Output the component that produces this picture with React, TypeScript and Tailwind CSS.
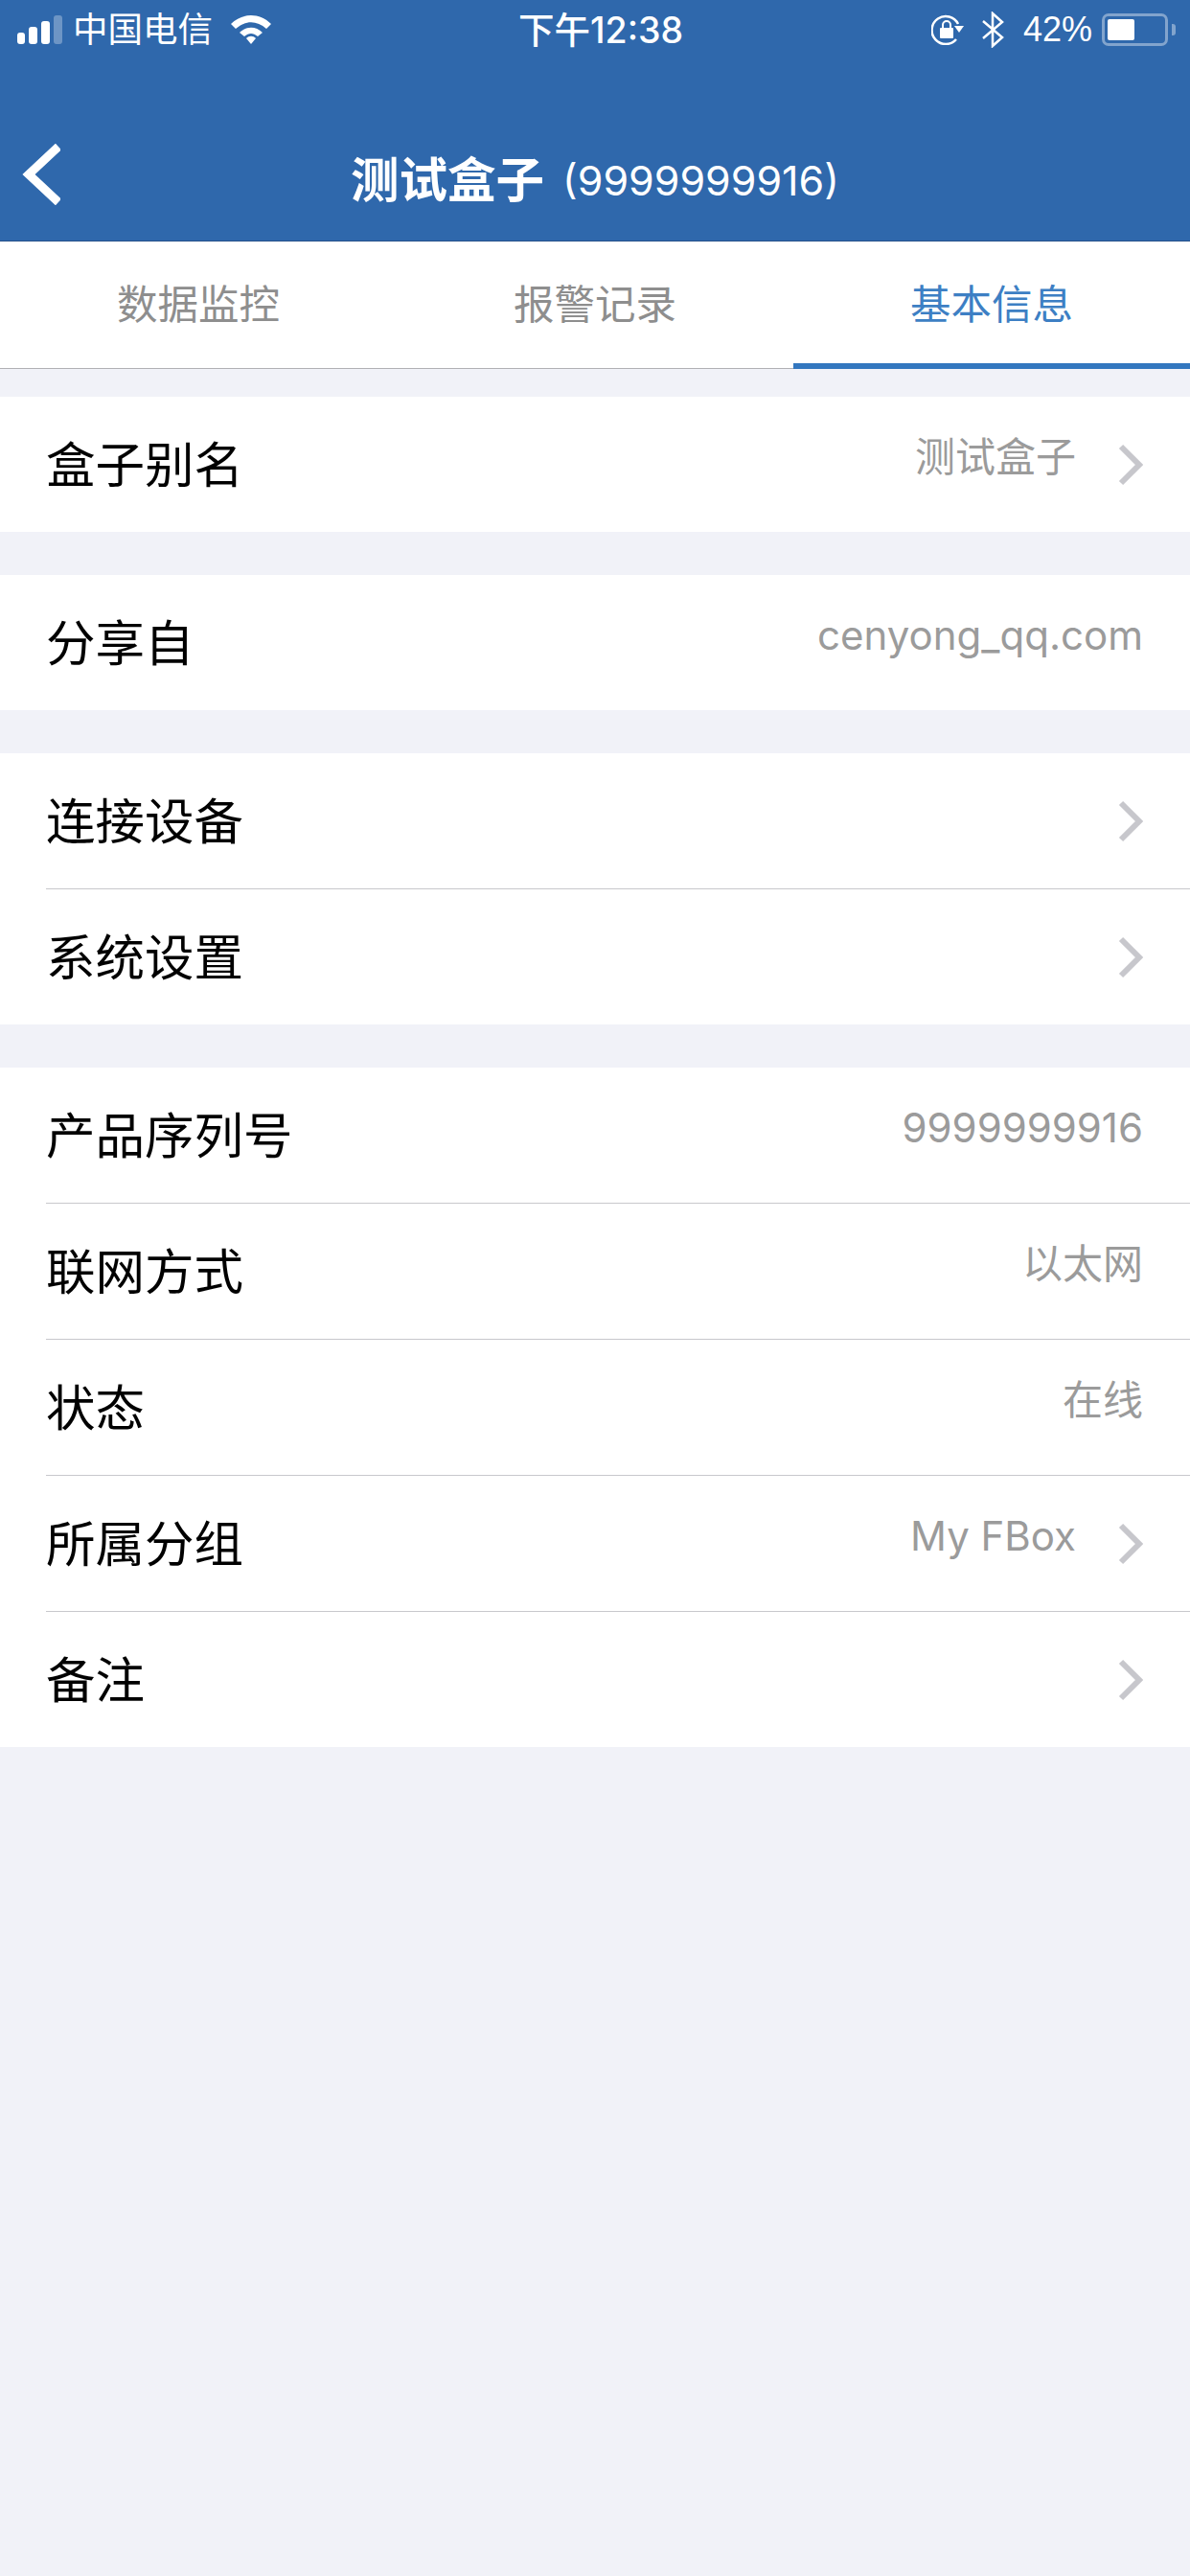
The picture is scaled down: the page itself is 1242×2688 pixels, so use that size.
function Chevron() {
  return (
    <svg width="26" height="44" viewBox="0 0 26 44" className="shrink-0">
      <path d="M3 3 L22 22 L3 41" fill="none" stroke="#c7c7cc" strokeWidth="6" />
    </svg>
  );
}

function Row({ label, value, arrow, last }: { label: string; value?: string; arrow?: boolean; last?: boolean }) {
  return (
    <div className="pl-[48px]">
      <div className={`flex items-center pr-[49px] ${last ? "h-[141px]" : "h-[142px] border-b border-[#c8c8cc]"}`}>
        <span className="text-[51.5px] leading-none text-black pt-[2px]">{label}</span>
        {value && (
          <span className={`ml-auto text-[42px] leading-none text-[#9b9b9b] -mt-[16px] ${arrow ? "mr-[44px]" : ""}`}>
            {value}
          </span>
        )}
        {arrow && (
          <span className={value ? "" : "ml-auto"}>
            <Chevron />
          </span>
        )}
      </div>
    </div>
  );
}

function Group({ children }: { children: React.ReactNode }) {
  return <div className="bg-white mb-[45px]">{children}</div>;
}

function StatusBar() {
  return (
    <div className="h-[62px] flex items-center justify-between pl-[18px] pr-[15px] text-white relative">
      <div className="flex items-center">
        <div className="flex items-end gap-[4px] h-[30px]">
          <span className="w-[8px] h-[12px] rounded-[3px] bg-white" />
          <span className="w-[9px] h-[18px] rounded-[3px] bg-white" />
          <span className="w-[9px] h-[24px] rounded-[3px] bg-white" />
          <span className="w-[9px] h-[30px] rounded-[3px] bg-white/30" />
        </div>
        <span className="ml-[11px] text-[36.5px] leading-none">中国电信</span>
        <svg width="42" height="30" viewBox="0 0 42 30" className="ml-[19px]">
          <path d="M0 9 C12 -3 30 -3 42 9 L37 14 C27 5 15 5 5 14 Z" fill="#fff" />
          <path d="M9 18 C16 11 26 11 33 18 L28 22 C23 18 19 18 14 22 Z" fill="#fff" />
          <path d="M16 24 C19 21 23 21 26 24 L21 30 Z" fill="#fff" />
        </svg>
      </div>
      <span className="absolute left-[541px] top-[13px] text-[37.5px] leading-none font-medium">下午12:38</span>
      <div className="flex items-center">
        <svg width="34" height="32" viewBox="0 0 34 32">
          <path d="M28 10 A14.5 14.5 0 1 0 26 26" fill="none" stroke="#fff" strokeWidth="2.5" />
          <path d="M24 12 L34 12 L29 19 Z" fill="#fff" />
          <rect x="9" y="14" width="14" height="11" rx="1" fill="#fff" />
          <path d="M12 14 V11 A4 4 0 0 1 20 11 V14" fill="none" stroke="#fff" strokeWidth="2" />
        </svg>
        <svg width="24" height="38" viewBox="0 0 24 38" className="ml-[18px]">
          <path d="M2 10 L22 27 L12 36 V2 L22 11 L2 28" fill="none" stroke="#fff" strokeWidth="2.5" />
        </svg>
        <span className="ml-[20px] text-[36px] leading-none font-['Liberation_Sans','Noto_Sans_CJK_SC',sans-serif]">42%</span>
        <div className="ml-[10px] w-[69px] h-[34px] rounded-[7px] border-[3px] border-white/40 p-[3px]">
          <div className="w-[28px] h-full bg-white rounded-[2px]" />
        </div>
        <span className="ml-[4px] w-[4px] h-[12px] bg-white/40 rounded-r-[3px]" />
      </div>
    </div>
  );
}

const tabs = ["数据监控", "报警记录", "基本信息"];

export default function App() {
  return (
    <div className="w-[1242px] h-[2688px] bg-[#f1f2f8] overflow-hidden font-['Inter','Noto_Sans_CJK_SC',sans-serif]">
      <header className="h-[252px] bg-[#2f68ac] border-b border-[#25508a]">
        <StatusBar />
        <div className="relative h-[189px] flex items-center justify-center text-white pt-[63px]">
          <svg width="40" height="64" viewBox="0 0 40 64" className="absolute left-[23px] top-[88px]">
            <path d="M38 3 L7 32 L38 61" fill="none" stroke="#fff" strokeWidth="9" />
          </svg>
          <span className="text-[50.5px] leading-none font-bold">测试盒子</span>
          <span className="ml-[19px] text-[43px] leading-none">(9999999916)</span>
        </div>
      </header>
      <nav className="h-[133px] bg-white grid grid-cols-3 border-b border-[#b0b0b4] mb-[29px]">
        {tabs.map((t, i) => (
          <div
            key={t}
            className={`relative h-[132px] flex items-center justify-center text-[42.5px] leading-none ${
              i === 2 ? "text-[#3d7fc4]" : "text-[#8e8e8e]"
            }`}
          >
            {t}
            {i === 2 && <span className="absolute left-0 right-0 bottom-[-1px] h-[6px] bg-[#3377bf]" />}
          </div>
        ))}
      </nav>
      <Group>
        <Row label="盒子别名" value="测试盒子" arrow last />
      </Group>
      <Group>
        <Row label="分享自" value="cenyong_qq.com" last />
      </Group>
      <Group>
        <Row label="连接设备" arrow />
        <Row label="系统设置" arrow last />
      </Group>
      <Group>
        <Row label="产品序列号" value="9999999916" />
        <Row label="联网方式" value="以太网" />
        <Row label="状态" value="在线" />
        <Row label="所属分组" value="My FBox" arrow />
        <Row label="备注" arrow last />
      </Group>
    </div>
  );
}
